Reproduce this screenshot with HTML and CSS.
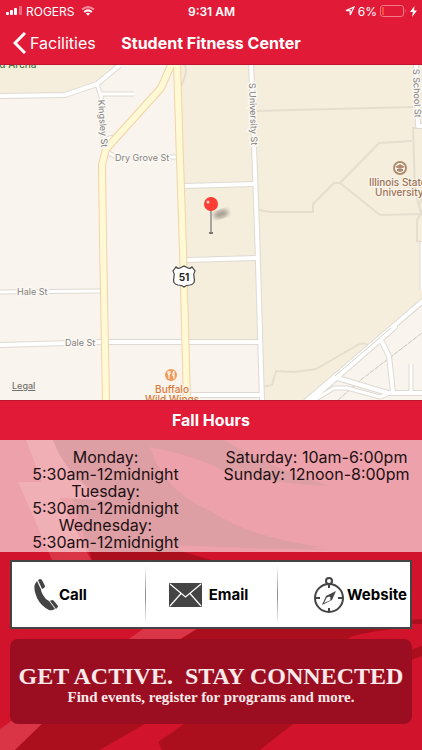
FILE: index.html
```html
<!DOCTYPE html>
<html lang="en">
<head>
    <meta charset="UTF-8">
    <meta name="viewport" content="width=device-width, initial-scale=1.0">
    <title>Student Fitness Center</title>
    <link rel="stylesheet" href="styles.css">
</head>
<body>
    <header class="top">
        <div class="status-bar">
            <div class="carrier">
                <svg width="17" height="10" viewBox="0 0 17 10" fill="#fff">
                    <rect x="0" y="6" width="3" height="3" rx="1"/>
                    <rect x="4" y="4" width="3" height="5" rx="1"/>
                    <rect x="8" y="2" width="3" height="7" rx="1"/>
                    <rect x="13" y="0" width="3" height="9" rx="1" opacity=".35"/>
                </svg>
                <span>ROGERS</span>
                <svg class="wifi" width="14" height="10" viewBox="0 0 14 10" fill="none" stroke="#fff" stroke-width="2">
                    <path d="M1 3.6Q7-1.4 13 3.6" opacity=".5"/>
                    <path d="M3.2 6Q7 2.8 10.8 6"/>
                    <path d="M5 7.6Q7 6 9 7.6L7 9.7Z" fill="#fff" stroke="none"/>
                </svg>
            </div>
            <div class="clock">9:31 AM</div>
            <div class="battery">
                <svg width="10" height="10" viewBox="0 0 10 10" fill="none" stroke="#fff" stroke-width="1.2">
                    <path d="M9 1L1 4.6H5.2V9Z"/>
                </svg>
                <span>6%</span>
                <svg width="27" height="12" viewBox="0 0 27 12">
                    <rect x=".5" y=".5" width="23" height="11" rx="2.5" fill="none" stroke="#f27a86"/>
                    <rect x="2" y="2" width="2" height="8" fill="#ff4a3c"/>
                    <path d="M25 4Q26.5 6 25 8Z" fill="#f27a86"/>
                </svg>
                <svg width="7" height="11" viewBox="0 0 7 11"><path d="M4.5 0L0 6H3L2 11L7 4.500H4Z" fill="#fff"/></svg>
            </div>
        </div>
        <nav class="nav-bar">
            <a class="back" href="#facilities">
                <svg width="13" height="22" viewBox="0 0 13 22" fill="none" stroke="#fff" stroke-width="3"><path d="M12 1L2 11L12 21"/></svg>
                Facilities
            </a>
            <h1>Student Fitness Center</h1>
        </nav>
    </header>

    <div class="map">
        <svg viewBox="0 65 422 335" preserveAspectRatio="xMidYMid slice" role="img" aria-label="Map of Student Fitness Center">
            <defs>
                <filter id="soft"><feGaussianBlur stdDeviation="2"/></filter>
                <g id="wide">
                    <path d="M-2 96L65 95L97 84L120 65"/>
                    <path d="M251 63L254 145L257 230L262 402"/>
                    <path d="M416 63L418 126H424"/>
                    <path d="M184 186L255 184"/>
                    <path d="M187 260L258 258"/>
                    <path d="M-2 345L102 342H262"/>
                    <path d="M189 395H262"/>
                    <path d="M305 402L424 300"/>
                    <path d="M311 400L395 327V324"/>
                    <path d="M334 377L388 393H424"/>
                    <path d="M381 340L389 356L393 392"/>
                </g>
                <g id="narrow">
                    <path d="M97 84L101 96L105 150"/>
                    <path d="M101 94H134"/>
                    <path d="M107 152L116 157H178"/>
                    <path d="M106 140Q111 136 117 138"/>
                    <path d="M-2 292L101 291"/>
                    <path d="M314 400L334 388H347L380 397L390 393"/>
                    <path d="M411 393V364"/>
                    <path d="M422 242V290"/>
                </g>
                <g id="main">
                    <path d="M172 63L161 88L106 149L102 165L103 240L106 402"/>
                    <path d="M177 63L180 160L183 250L187 402"/>
                </g>
            </defs>
            <rect x="0" y="65" width="422" height="335" fill="#f9f4ed"/>
            <!-- campus ground -->
            <path class="campus" d="M0 65H119L97 84L65 95L0 96Z"/>
            <path class="campus" d="M177 65H422V301L305 400H262L261 342H186Z"/>

            <!-- footpaths -->
            <g class="path">
                <path d="M254 111L413 107"/>
                <path d="M259 210L270 212H313V204L334 183H340L379 143L412 141"/>
                <path d="M340 183L380 215L422 214"/>
                <path d="M422 128L413 128L415 190L421 214L417 220V241L422 242"/>
                <path d="M422 198L419 205L422 214"/>
                <path d="M262 387L272 385L276 371L295 372L316 369L354 347Q363 341 368 345"/>
                <path d="M185 65Q188 72 181 86"/>
            </g>

            <path class="rail" d="M338 400L362 379L422 333"/>

            <!-- casings go under every street so the junctions stay open -->
            <use href="#wide" class="road wide-casing"/>
            <use href="#narrow" class="road narrow-casing"/>
            <use href="#wide" class="road wide"/>
            <use href="#narrow" class="road narrow"/>
            <path d="M335 376L391 328" stroke="#d5d1cb" stroke-width="1"/>
            <use href="#main" class="road main-casing"/>
            <use href="#main" class="road main"/>

            <!-- street names -->
            <g class="road-name">
                <text x="115" y="161">Dry Grove St</text>
                <text x="17" y="295">Hale St</text>
                <text x="65" y="346">Dale St</text>
                <text transform="translate(98 100) rotate(86)">Kingsley St</text>
                <text transform="translate(249 83) rotate(88)">S University St</text>
                <text transform="translate(413 69) rotate(88)">S School St</text>
            </g>
            <text class="arena" x="-10" y="68">ard Arena</text>

            <!-- university -->
            <circle cx="400" cy="168" r="6" fill="#fff" stroke="#b18a6b" stroke-width="2"/>
            <path d="M395 167L400 164L405 167L400 169Z M397 169V171L400 172L403 171V169" fill="#b18a6b"/>
            <g class="place campus-name">
                <text x="369" y="186">Illinois State</text>
                <text x="375" y="196">University</text>
            </g>

            <!-- restaurant -->
            <circle cx="171" cy="375" r="6" fill="#f09a5b"/>
            <path d="M168 371V374Q169 376 170 374V371M169 371V379M174 371V379M174 371Q172 373 173 376H174" fill="none" stroke="#fff" stroke-width="1"/>
            <g class="place food" text-anchor="middle">
                <text x="172" y="393">Buffalo</text>
                <text x="172" y="403">Wild Wings</text>
            </g>

            <!-- US 51 shield -->
            <path d="M176 267Q178 269 180 268Q182 267 184 266Q186 267 188 268Q190 269 192 267L195 271Q193 274 194 277Q196 284 190 285Q186 285 184 287Q182 285 178 285Q172 284 174 277Q175 274 173 271Z" fill="#fff" stroke="#444" stroke-width="1.2"/>
            <text class="shield" x="184" y="281" text-anchor="middle">51</text>

            <!-- pin -->
            <ellipse cx="221" cy="214" rx="8" ry="4" transform="rotate(-18 221 214)" fill="#8a8378" opacity=".75" filter="url(#soft)"/>
            <path d="M211 209V232" stroke="#8c8c8c" stroke-width="1.5"/>
            <path d="M209 233H213" stroke="#55504a" stroke-width="1.5"/>
            <circle cx="211" cy="204" r="7" fill="#fb3d34"/>
            <circle cx="208" cy="202" r="1.5" fill="#ffd9d4"/>
        </svg>
        <a class="legal" href="#legal">Legal</a>
    </div>

    <h2 class="section-title">Fall Hours</h2>

    <main class="panel">
        <svg class="swoosh" viewBox="0 440 422 310" preserveAspectRatio="none" aria-hidden="true">
            <rect y="440" width="422" height="310" fill="#d1142b"/>
            <path d="M53 440H224Q270 468 330 486Q230 482 150 447Q168 500 211 512Q250 542 330 550L160 545L211 560H92Z" fill="#ab0f1d"/>
            <path d="M150 447Q230 462 262 500Q300 535 330 549Q180 545 150 447Z" fill="#d1142b"/>
            <path d="M150 447Q164 492 211 511Q250 538 322 547Q250 552 170 541Z" fill="#ab0f1d"/>
            <path d="M26 440H53Q66 476 105 500L60 498L92 562H53L18 482H42Z" fill="#d93546"/>
            <path d="M143 629H197L42 724L15 750H0V729Z" fill="#d93546"/>
            <path d="M197 629H394Q350 634 346 640L293 724L260 750H160Q150 740 183 724H145L100 750H15L42 724Z" fill="#ab0f1d"/>
            <path d="M145 724H184L158 742L162 750H100Z" fill="#d1142b"/>
            <path d="M405 622Q414 619 422 619V624H405ZM405 653Q414 648 422 646V656L405 662Z" fill="#ab0f1d"/>
        </svg>

        <section class="hours">
            <p>Monday:<br>5:30am-12midnight<br>Tuesday:<br>5:30am-12midnight<br>Wednesday:<br>5:30am-12midnight</p>
            <p>Saturday: 10am-6:00pm<br>Sunday: 12noon-8:00pm</p>
        </section>

        <div class="actions">
            <button class="action" type="button">
                <svg width="24" height="32" viewBox="0 0 24 32" fill="#444">
                    <path d="M4 1L6 0Q7 0 8 1L11 7Q11 8 10 9L8 10Z"/>
                    <path d="M3 2L7 10.500Q7 13 9 16Q11 20 15 22L21 30Q18 32 15 31Q7 27 3 19Q-1 10 1 5Z"/>
                    <path d="M16 22L18 21Q19 21 20 22L24 27Q24 28 23 29L22 30Z"/>
                </svg>
                Call
            </button>
            <button class="action" type="button">
                <svg width="39" height="24" viewBox="0 0 39 24">
                    <rect width="33" height="24" rx="1" fill="#444"/>
                    <path d="M1 1L16.5 14L32 1M1 23L12 10.5M32 23L21 10.5" fill="none" stroke="#fff" stroke-width="1.2"/>
                </svg>
                Email
            </button>
            <button class="action" type="button">
                <svg width="32" height="36" viewBox="0 0 32 36" fill="none" stroke="#444" stroke-width="2">
                    <circle cx="15" cy="21" r="14"/>
                    <circle cx="15" cy="4" r="3"/>
                    <path d="M15 7V11M15 31V35M1 21H6M24 21H29"/>
                    <path d="M22 14L18 23L8 28L12 19Z" fill="#444" stroke="none"/>
                    <path d="M13 20L17 23L10 26Z" fill="#fff" stroke="none"/>
                    <circle cx="15" cy="21" r="1.5" fill="#fff" stroke="none"/>
                </svg>
                Website
            </button>
        </div>

        <a class="banner" href="#connect">
            <strong>GET ACTIVE.&nbsp; STAY CONNECTED</strong>
            <span>Find events, register for programs and more.</span>
        </a>
    </main>
</body>
</html>
```

FILE: styles.css
```css
* {
    box-sizing: border-box;
}

body {
    display: flex;
    flex-direction: column;
    min-height: 100vh;
    margin: 0;
    background-color: #d1142b;
    font-family: Inter, Arial, sans-serif;
}

h1,
h2,
p {
    margin: 0;
}

a {
    color: inherit;
    text-decoration: none;
}

svg {
    flex: none;
}

/* Header */
.top {
    background-color: #e01a37;
    color: #fff;
    border-bottom: 1px solid #c01530;
}

.status-bar {
    display: grid;
    grid-template-columns: 1fr auto 1fr;
    align-items: center;
    height: 22px;
    padding: 0 5px 0 6px;
    font-size: 12px;
}

.carrier,
.battery {
    display: flex;
    align-items: center;
    gap: 3px;
}

.wifi {
    margin-left: 3px;
}

.clock {
    font-weight: 600;
}

.battery {
    justify-content: flex-end;
}

.nav-bar {
    display: grid;
    grid-template-columns: 1fr auto 1fr;
    align-items: center;
    height: 42px;
    padding: 0 13px;
}

.back {
    display: flex;
    align-items: center;
    gap: 4px;
    font-size: 16px;
}

h1 {
    font-size: 16px;
    font-weight: 700;
}

/* Map */
.map {
    position: relative;
    flex: 1 0 240px;
    overflow: hidden;
}

.map > svg {
    position: absolute;
    width: 100%;
    height: 100%;
}

.campus {
    fill: #f6eedd;
}

.path {
    fill: none;
    stroke: #e5dece;
    stroke-width: 2;
}

.rail {
    fill: none;
    stroke: #c9c5bf;
    stroke-width: 1;
    stroke-dasharray: 5 1;
}

.road {
    fill: none;
    stroke: #fff;
    stroke-linejoin: round;
}

.wide {
    stroke-width: 4;
}

.narrow {
    stroke-width: 3;
}

.wide-casing {
    stroke: #dedad3;
    stroke-width: 6;
}

.narrow-casing {
    stroke: #dedad3;
    stroke-width: 5;
}

.main {
    stroke: #fff9d5;
    stroke-width: 6;
}

.main-casing {
    stroke: #f3d3a4;
    stroke-width: 8;
}

.road-name {
    fill: #85827e;
    stroke: #fbf8f3;
    stroke-width: 3;
    paint-order: stroke;
    font-size: 9px;
}

.arena {
    fill: #4c7a45;
    font-size: 10px;
    font-weight: 500;
}

.place {
    stroke: #faf5ec;
    stroke-width: 2;
    paint-order: stroke;
    font-size: 10px;
    font-weight: 500;
}

.campus-name {
    fill: #9c7254;
}

.food {
    fill: #d9793c;
}

.shield {
    fill: #222;
    font-size: 10px;
    font-weight: 700;
}

.legal {
    position: absolute;
    left: 12px;
    bottom: 9px;
    color: #76726d;
    font-size: 9px;
    font-weight: 500;
    text-decoration: underline;
}

/* Hours */
.section-title {
    padding: 10px;
    background-color: #e01a37;
    border-top: 1px solid #c01530;
    color: #fff;
    font-size: 16px;
    font-weight: 700;
    line-height: 19px;
    text-align: center;
}

.panel {
    position: relative;
    padding-bottom: 26px;
}

.swoosh {
    position: absolute;
    z-index: -1;
    width: 100%;
    height: 100%;
}

.hours {
    display: grid;
    grid-template-columns: 1fr 1fr;
    padding: 9px 0 1px;
    background-color: rgba(255, 255, 255, 0.6);
    color: #1c1013;
    font-size: 16px;
    line-height: 17px;
    text-align: center;
}

/* Call, email, website */
.actions {
    display: grid;
    grid-template-columns: repeat(3, 1fr);
    margin: 8px 10px 10px;
    background-color: #fff;
    border: 2px solid #444;
}

.action {
    display: flex;
    align-items: center;
    gap: 1px;
    height: 65px;
    padding: 0 3px 0 22px;
    background: none;
    border: 0;
    color: #000;
    font-family: inherit;
    font-size: 15px;
    font-weight: 700;
    cursor: pointer;
}

.action + .action {
    padding-left: 24px;
    background: linear-gradient(transparent, #888, transparent) left / 1px 60px no-repeat;
}

.action:last-child {
    justify-content: flex-end;
    padding-left: 0;
}

/* Banner */
.banner {
    display: flex;
    flex-direction: column;
    align-items: center;
    margin: 0 10px;
    padding: 24px 0 19px;
    background-color: #9b0e21;
    border-radius: 8px;
    color: #fbe9ea;
    font-family: "Liberation Serif", "Times New Roman", serif;
    white-space: nowrap;
}

.banner strong {
    font-size: 24px;
    line-height: 26px;
}

.banner span {
    font-size: 15px;
    font-weight: 700;
    line-height: 16px;
}
```
